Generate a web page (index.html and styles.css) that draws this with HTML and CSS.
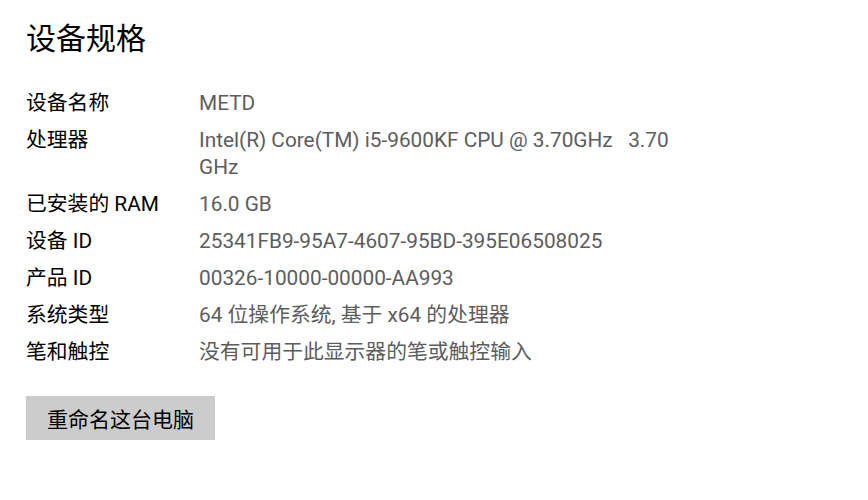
FILE: index.html
```html
<!DOCTYPE html>
<html lang="zh-CN">
<head>
<meta charset="utf-8">
<title>设备规格</title>
<link rel="stylesheet" href="styles.css">
</head>
<body>
<main class="page">
  <h1 class="title">设备规格</h1>
  <dl class="specs">
    <div class="row"><dt>设备名称</dt><dd>METD</dd></div>
    <div class="row"><dt>处理器</dt><dd>Intel(R) Core(TM) i5-9600KF CPU @ 3.70GHz&nbsp;&nbsp;&nbsp;3.70 GHz</dd></div>
    <div class="row"><dt>已安装的 RAM</dt><dd>16.0 GB</dd></div>
    <div class="row"><dt>设备 ID</dt><dd>25341FB9-95A7-4607-95BD-395E06508025</dd></div>
    <div class="row"><dt>产品 ID</dt><dd>00326-10000-00000-AA993</dd></div>
    <div class="row"><dt>系统类型</dt><dd>64 位操作系统, 基于 x64 的处理器</dd></div>
    <div class="row"><dt>笔和触控</dt><dd>没有可用于此显示器的笔或触控输入</dd></div>
  </dl>
  <button class="btn" type="button">重命名这台电脑</button>
</main>
</body>
</html>
```

FILE: styles.css
```css
html, body {
  margin: 0;
  padding: 0;
  background: #ffffff;
}
body {
  font-family: "Roboto", "Noto Sans CJK SC", sans-serif;
  color: #000;
}
.page {
  padding: 18px 26px 0 26px;
}
.title {
  margin: 0;
  font-family: "Noto Sans", "Noto Sans CJK SC", sans-serif;
  font-size: 30px;
  font-weight: 400;
  line-height: 40px;
}
.specs {
  margin: 32px 0 0 0;
  padding: 0;
  width: 650px;
}
.row {
  display: flex;
  margin-bottom: 10px;
  font-size: 20.8px;
  line-height: 27px;
}
.row dt {
  width: 173px;
  flex: none;
}
.row dd {
  margin: 0;
  flex: 1;
  color: #5d5d5d;
}
.btn {
  margin-top: 20px;
  height: 44px;
  padding: 0 21px;
  border: 0;
  background: #cccccc;
  font-family: inherit;
  font-size: 21px;
  color: #000;
}
```
